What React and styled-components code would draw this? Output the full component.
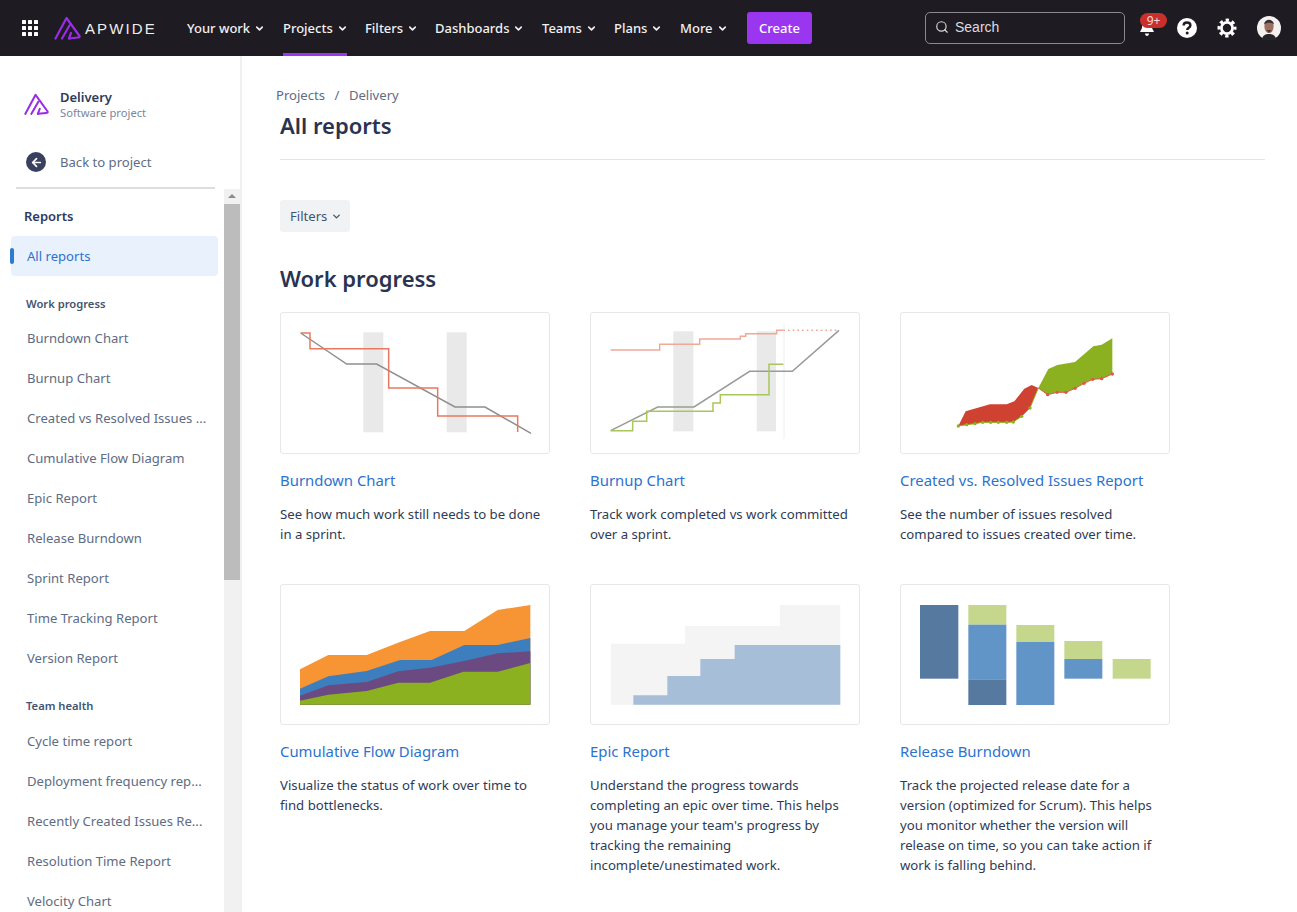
import styled, { createGlobalStyle } from 'styled-components';
import { ArrowLeft, ChevronDown, Search } from 'lucide-react';

const GlobalStyle = createGlobalStyle`
  html, body {
    margin: 0;
    height: 100%;
    overflow: hidden;
    background: #fff;
  }
  body {
    font-family: "Noto Sans", "Open Sans", Arial, sans-serif;
    font-size: 13.1px;
    color: #2f3b55;
  }
`;

const navItems = [
  { label: 'Your work', width: 96 },
  { label: 'Projects', width: 82, active: true },
  { label: 'Filters', width: 70 },
  { label: 'Dashboards', width: 107 },
  { label: 'Teams', width: 72 },
  { label: 'Plans', width: 66 },
  { label: 'More', width: 67 },
];

const workProgress = [
  'Burndown Chart',
  'Burnup Chart',
  'Created vs Resolved Issues ...',
  'Cumulative Flow Diagram',
  'Epic Report',
  'Release Burndown',
  'Sprint Report',
  'Time Tracking Report',
  'Version Report',
];

const teamHealth = [
  'Cycle time report',
  'Deployment frequency rep...',
  'Recently Created Issues Re...',
  'Resolution Time Report',
  'Velocity Chart',
];

const BurndownArt = () => (
  <svg viewBox="18 25 804 420" width="100%" height="100%">
    <rect x="265" y="83" width="60" height="300" fill="#e9e9e9" />
    <rect x="515" y="83" width="60" height="300" fill="#e9e9e9" />
    <polyline points="77,85 215,178 305,178 540,307 630,307 768,386" fill="none" stroke="#8f8f8f" strokeWidth="4.5" />
    <polyline points="77,85 105,85 105,132 341,132 341,250 488,250 488,334 728,334 728,382" fill="none" stroke="#e8785f" strokeWidth="4.5" />
  </svg>
);

const BurnupArt = () => (
  <svg viewBox="18 25 804 420" width="100%" height="100%">
    <rect x="265" y="80" width="60" height="300" fill="#e9e9e9" />
    <rect x="515" y="80" width="58" height="300" fill="#e9e9e9" />
    <line x1="597" y1="57" x2="597" y2="403" stroke="#eeeeee" strokeWidth="3" />
    <polyline points="77,136 224,136 224,119 344,119 344,103 466,103 466,95 482,95 482,87 575,87 575,77 595,77" fill="none" stroke="#f0a898" strokeWidth="4.5" />
    <line x1="595" y1="77" x2="762" y2="77" stroke="#f0a898" strokeWidth="4.5" strokeDasharray="5 9" />
    <polyline points="77,378 218,307 327,307 494,200 622,200 762,77" fill="none" stroke="#9a9a9a" strokeWidth="4.5" />
    <polyline points="77,378 143,378 143,350 185,350 185,320 384,320 384,295 406,295 406,270 552,270 552,179 595,179" fill="none" stroke="#a9c65a" strokeWidth="4.5" />
  </svg>
);

const greenDots = [[190, 364], [215, 360], [240, 357], [263, 353], [287, 353], [310, 353], [335, 353], [355, 352], [380, 335], [405, 310]];
const redDots = [[458, 270], [486, 263], [513, 263], [540, 251], [567, 236], [593, 224], [620, 222], [652, 208]];

const CreatedArt = () => (
  <svg viewBox="18 25 804 420" width="100%" height="100%">
    <polygon points="190,364 212,320 285,299 335,299 358,290 388,252 410,241 430,250 405,310 380,335 355,352 335,353 263,353 240,357 215,360" fill="#cf4232" />
    <polygon points="430,250 460,193 487,181 540,172 595,125 620,120 652,101 652,208 620,222 593,224 567,236 540,251 513,263 486,263 458,270" fill="#8bb120" />
    <polyline points={greenDots.map((p) => p.join(',')).join(' ') + ' 430,250'} fill="none" stroke="#8bb120" strokeWidth="3" />
    <polyline points={'430,250 ' + redDots.map((p) => p.join(',')).join(' ')} fill="none" stroke="#e0574a" strokeWidth="3" />
    {greenDots.map(([x, y]) => <circle key={x} cx={x} cy={y} r="5" fill="#8bb120" />)}
    {redDots.map(([x, y]) => <circle key={x} cx={x} cy={y} r="5" fill="#e0574a" />)}
  </svg>
);

const CumulativeArt = () => (
  <svg viewBox="18 19 804 417" width="100%" height="100%">
    <polygon points="75,272 160,229 275,229 375,190 465,157 568,157 668,94 766,79 766,378 75,378" fill="#f79433" />
    <polygon points="75,330 160,293 275,277 375,244 470,244 568,199 668,199 766,178 766,378 75,378" fill="#3d7ebf" />
    <polygon points="75,351 160,320 275,310 370,278 465,267 568,247 668,224 766,218 766,378 75,378" fill="#6a4a80" />
    <polygon points="75,366 160,348 275,337 370,312 465,312 565,279 668,279 766,253 766,378 75,378" fill="#8bb120" />
  </svg>
);

const EpicArt = () => (
  <svg viewBox="18 19 804 417" width="100%" height="100%">
    <polygon points="78,195 300,195 300,142 585,142 585,79 766,79 766,378 78,378" fill="#f4f4f4" />
    <polygon points="145,378 145,350 247,350 247,292 346,292 346,241 449,241 449,199 766,199 766,378" fill="#a7bed8" />
  </svg>
);

const releaseBars = [
  [75, 79, 115, 221, '#56799f'],
  [220, 79, 114, 59, '#c5d78d'],
  [220, 138, 114, 164, '#6195c8'],
  [220, 302, 114, 77, '#56799f'],
  [364, 139, 114, 51, '#c5d78d'],
  [364, 190, 114, 189, '#6195c8'],
  [508, 187, 114, 54, '#c5d78d'],
  [508, 241, 114, 59, '#6195c8'],
  [653, 241, 114, 59, '#c5d78d'],
];

const ReleaseArt = () => (
  <svg viewBox="18 19 804 417" width="100%" height="100%">
    {releaseBars.map(([x, y, w, h, fill]) => (
      <rect key={`${x}-${y}`} x={x} y={y} width={w} height={h} fill={fill} />
    ))}
  </svg>
);

const reports = [
  {
    title: 'Burndown Chart',
    text: 'See how much work still needs to be done in a sprint.',
    Art: BurndownArt,
    artHeight: 142,
  },
  {
    title: 'Burnup Chart',
    text: 'Track work completed vs work committed over a sprint.',
    Art: BurnupArt,
    artHeight: 142,
  },
  {
    title: 'Created vs. Resolved Issues Report',
    text: 'See the number of issues resolved compared to issues created over time.',
    Art: CreatedArt,
    artHeight: 142,
  },
  {
    title: 'Cumulative Flow Diagram',
    text: 'Visualize the status of work over time to find bottlenecks.',
    Art: CumulativeArt,
    artHeight: 141,
  },
  {
    title: 'Epic Report',
    text: "Understand the progress towards completing an epic over time. This helps you manage your team's progress by tracking the remaining incomplete/unestimated work.",
    Art: EpicArt,
    artHeight: 141,
  },
  {
    title: 'Release Burndown',
    text: 'Track the projected release date for a version (optimized for Scrum). This helps you monitor whether the version will release on time, so you can take action if work is falling behind.',
    Art: ReleaseArt,
    artHeight: 141,
  },
];

const Logo = ({ width, stroke }) => (
  <svg width={width} viewBox="0 0 27 24" fill="none" stroke={stroke} strokeWidth="2.2" strokeLinejoin="round" strokeLinecap="round">
    <path d="M1.5 22.5 L12.5 2 L25.5 20 Q26 21.5 24 21.5 L15 22.5" />
    <path d="M8 22.5 L15.5 9.5" />
    <path d="M15 22.5 L17 17" />
  </svg>
);

const AppsIcon = () => (
  <svg width="16" height="16" viewBox="0 0 16 16" fill="#fff">
    {[0, 6, 12].map((y) => [0, 6, 12].map((x) => (
      <rect key={`${x}-${y}`} x={x} y={y} width="4" height="4" rx="0.6" />
    )))}
  </svg>
);

const BellIcon = () => (
  <svg width="18" height="18" viewBox="0 0 18 18" fill="#fff">
    <path d="M9 2 C5 2 4 6 4 9 L2 13 H16 L14 9 C14 6 13 2 9 2 Z" />
    <path d="M7 14.5 H11 C11 16 10 17 9 17 C8 17 7 16 7 14.5 Z" />
  </svg>
);

const HelpIcon = () => (
  <svg width="22" height="22" viewBox="0 0 22 22">
    <circle cx="11" cy="11" r="10" fill="#fff" />
    <path d="M7.6 8.6 C7.6 6.6 9.2 5.5 11 5.5 C12.9 5.5 14.4 6.7 14.4 8.4 C14.4 10.6 11.2 10.8 11.2 13" fill="none" stroke="#1f1b22" strokeWidth="2.4" />
    <circle cx="11.2" cy="16" r="1.5" fill="#1f1b22" />
  </svg>
);

const GearIcon = () => (
  <svg width="20" height="20" viewBox="0 0 20 20" fill="none" stroke="#fff">
    <circle cx="10" cy="10" r="5.6" strokeWidth="2.8" />
    <circle cx="10" cy="10" r="8" strokeWidth="3" strokeDasharray="3.3 2.98" strokeDashoffset="1.6" />
  </svg>
);

const AvatarIcon = () => (
  <svg width="24" height="24" viewBox="0 0 24 24">
    <circle cx="12" cy="12" r="12" fill="#f4f2f0" />
    <path d="M5 24 C5 19 9 18 12 18 C15 18 19 19 19 24 Z" fill="#26262a" />
    <ellipse cx="12" cy="10.5" rx="4.6" ry="6.6" fill="#9c6f5e" />
    <path d="M7 8.5 C7.5 2.5 16.5 2 17 8.5 C14.5 6 10 6 7 8.5 Z" fill="#3a3030" />
    <path d="M9.5 14 H14.5 L12 17 Z" fill="#4f332e" />
  </svg>
);

const App = () => {
  return (
    <>
      <GlobalStyle />
      <Page>
        <TopBar>
          <AppsButton>
            <AppsIcon />
          </AppsButton>
          <Brand>
            <Logo width={27} stroke="#9a2be8" />
            <BrandName>APWIDE</BrandName>
          </Brand>
          <Nav>
            {navItems.map((item) => (
              <NavItem key={item.label} $width={item.width} $active={item.active}>
                {item.label}
                <ChevronDown size={11} strokeWidth={3.5} />
              </NavItem>
            ))}
            <CreateButton>Create</CreateButton>
          </Nav>
          <RightTools>
            <SearchBox>
              <Search size={14} strokeWidth={2} color="#d8d8d8" />
              Search
            </SearchBox>
            <BellWrap>
              <BellIcon />
              <Badge>9+</Badge>
            </BellWrap>
            <ToolIcon $gap={19}>
              <HelpIcon />
            </ToolIcon>
            <ToolIcon $gap={20}>
              <GearIcon />
            </ToolIcon>
            <ToolIcon $gap={0}>
              <AvatarIcon />
            </ToolIcon>
          </RightTools>
        </TopBar>
        <Body>
          <Sidebar>
            <ProjectHead>
              <Logo width={25} stroke="#9a2be8" />
              <div>
                <ProjectName>Delivery</ProjectName>
                <ProjectType>Software project</ProjectType>
              </div>
            </ProjectHead>
            <BackRow>
              <BackCircle>
                <ArrowLeft size={13} strokeWidth={3.2} color="#fff" />
              </BackCircle>
              Back to project
            </BackRow>
            <SideDivider />
            <SideScroll>
              <SideList>
                <ReportsLabel>Reports</ReportsLabel>
                <ActiveItem>All reports</ActiveItem>
                <GroupLabel $after={6}>Work progress</GroupLabel>
                {workProgress.map((name) => (
                  <SideItem key={name}>{name}</SideItem>
                ))}
                <GroupLabel $after={7}>Team health</GroupLabel>
                {teamHealth.map((name) => (
                  <SideItem key={name}>{name}</SideItem>
                ))}
              </SideList>
              <ScrollBar>
                <ScrollArrow />
                <ScrollThumb />
              </ScrollBar>
            </SideScroll>
          </Sidebar>
          <Main>
            <Breadcrumbs>
              <span>Projects</span>
              <span>/</span>
              <span>Delivery</span>
            </Breadcrumbs>
            <PageTitle>All reports</PageTitle>
            <Divider />
            <FiltersButton>
              Filters
              <ChevronDown size={11} strokeWidth={3} />
            </FiltersButton>
            <SectionTitle>Work progress</SectionTitle>
            <CardGrid>
              {reports.map(({ title, text, Art, artHeight }) => (
                <Card key={title}>
                  <Thumb $height={artHeight}>
                    <Art />
                  </Thumb>
                  <CardTitle>{title}</CardTitle>
                  <CardText>{text}</CardText>
                </Card>
              ))}
            </CardGrid>
          </Main>
        </Body>
      </Page>
    </>
  );
};
export default App;

const Page = styled.div`
  display: flex;
  flex-direction: column;
  height: 100vh;
  overflow: hidden;
`;
const TopBar = styled.header`
  display: flex;
  align-items: center;
  flex: 0 0 56px;
  height: 56px;
  background: #1f1b22;
  color: #f1f1f1;
`;
const AppsButton = styled.div`
  display: flex;
  margin: 0 16px 0 22px;
`;
const Brand = styled.div`
  display: flex;
  align-items: center;
  gap: 4px;
  width: 133px;
`;
const BrandName = styled.span`
  font-family: "Liberation Sans", Arial, sans-serif;
  font-size: 15px;
  letter-spacing: 2.1px;
  color: #eeeeee;
`;
const Nav = styled.nav`
  display: flex;
  align-items: center;
  height: 100%;
`;
const NavItem = styled.div`
  box-sizing: border-box;
  display: flex;
  align-items: center;
  gap: 4px;
  width: ${(p) => p.$width}px;
  height: 100%;
  position: relative;
  font-size: 13px;
  font-weight: 500;
  white-space: nowrap;
  &::after {
    content: '';
    display: ${(p) => (p.$active ? 'block' : 'none')};
    position: absolute;
    left: 0;
    bottom: 0;
    width: 64px;
    height: 3px;
    background: #9b36f0;
  }
`;
const CreateButton = styled.button`
  width: 65px;
  height: 32px;
  border: none;
  border-radius: 3px;
  background: #9b36f0;
  color: #fff;
  font: 500 13px "Noto Sans", sans-serif;
`;
const RightTools = styled.div`
  display: flex;
  align-items: center;
  margin-left: auto;
  padding-right: 16px;
`;
const SearchBox = styled.div`
  box-sizing: border-box;
  display: flex;
  align-items: center;
  gap: 6px;
  width: 200px;
  height: 32px;
  padding: 0 0 2px 9px;
  margin-right: 13px;
  border: 1px solid #8a8a8e;
  border-radius: 5px;
  font: 14px "Liberation Sans", Arial, sans-serif;
  color: #dcdce0;
`;
const BellWrap = styled.div`
  position: relative;
  display: flex;
  justify-content: center;
  width: 18px;
  margin-right: 20px;
  padding-bottom: 1px;
`;
const Badge = styled.span`
  position: absolute;
  left: 2px;
  top: -6px;
  width: 27px;
  height: 15px;
  border-radius: 8px;
  background: #c9302c;
  color: #f8dcdc;
  font-size: 12px;
  line-height: 15px;
  text-align: center;
`;
const ToolIcon = styled.div`
  display: flex;
  margin-right: ${(p) => p.$gap}px;
`;
const Body = styled.div`
  display: flex;
  flex: 1;
  min-height: 0;
`;
const Sidebar = styled.aside`
  box-sizing: border-box;
  display: flex;
  flex-direction: column;
  flex: 0 0 242px;
  min-width: 0;
  width: 242px;
  border-right: 2px solid #f0f0f2;
`;
const ProjectHead = styled.div`
  display: flex;
  align-items: center;
  gap: 11px;
  height: 42px;
  padding: 27px 0 0 24px;
`;
const ProjectName = styled.div`
  font-size: 13px;
  font-weight: 600;
  line-height: 16px;
  color: #2f3a5a;
`;
const ProjectType = styled.div`
  font-size: 11.2px;
  line-height: 15px;
  color: #7a869a;
`;
const BackRow = styled.div`
  display: flex;
  align-items: center;
  gap: 14px;
  margin-top: 26px;
  padding-left: 26px;
  height: 22px;
  color: #5e6c84;
`;
const BackCircle = styled.span`
  display: flex;
  align-items: center;
  justify-content: center;
  width: 20px;
  height: 20px;
  border-radius: 50%;
  background: #3a415f;
`;
const SideDivider = styled.div`
  height: 2px;
  margin: 14px 25px 0 16px;
  background: #dcdde0;
`;
const SideScroll = styled.div`
  display: flex;
  flex: 1;
  min-height: 0;
  overflow: hidden;
`;
const SideList = styled.div`
  flex: 1;
  min-width: 0;
  padding-top: 17px;
`;
const ReportsLabel = styled.div`
  height: 20px;
  padding-left: 24px;
  font-size: 13px;
  font-weight: 600;
  line-height: 20px;
  color: #2f3a5a;
`;
const ActiveItem = styled.div`
  position: relative;
  height: 40px;
  margin: 10px 6px 0 11px;
  padding-left: 16px;
  border-radius: 4px;
  background: #e9f1fd;
  color: #2c73cf;
  line-height: 40px;
  &::before {
    content: '';
    position: absolute;
    left: -1px;
    top: 12px;
    width: 4px;
    height: 16px;
    border-radius: 2px;
    background: #2c7bd0;
  }
`;
const GroupLabel = styled.div`
  height: 16px;
  margin-top: 20px;
  margin-bottom: ${(p) => p.$after}px;
  padding-left: 26px;
  font-size: 11.2px;
  font-weight: 600;
  line-height: 16px;
  color: #44546f;
`;
const SideItem = styled.div`
  height: 40px;
  padding-left: 27px;
  color: #5e6c84;
  line-height: 40px;
  white-space: nowrap;
`;
const ScrollBar = styled.div`
  flex: 0 0 16px;
  background: #f1f1f1;
`;
const ScrollArrow = styled.div`
  width: 0;
  height: 0;
  margin: 5px auto 6px;
  border-left: 4px solid transparent;
  border-right: 4px solid transparent;
  border-bottom: 4px solid #8a8a8a;
`;
const ScrollThumb = styled.div`
  height: 376px;
  background: #bcbcbc;
`;
const Main = styled.main`
  flex: 1;
  min-width: 0;
  padding: 29px 32px 0 38px;
`;
const Breadcrumbs = styled.div`
  display: flex;
  gap: 9.5px;
  margin-left: -4px;
  height: 20px;
  color: #5e6c84;
  line-height: 20px;
`;
const PageTitle = styled.h1`
  margin: 4px 0 0;
  font-size: 22px;
  font-weight: 600;
  line-height: 32px;
  color: #2a3450;
`;
const Divider = styled.div`
  height: 1px;
  margin-top: 18px;
  background: #e4e5e8;
`;
const FiltersButton = styled.button`
  display: flex;
  align-items: center;
  gap: 4px;
  height: 32px;
  margin-top: 40px;
  padding: 0 8px 0 10px;
  border: none;
  border-radius: 3px;
  background: #f1f2f4;
  color: #44546f;
  font: 13.1px "Noto Sans", sans-serif;
`;
const SectionTitle = styled.h2`
  margin: 29px 0 0;
  font-size: 22px;
  font-weight: 600;
  line-height: 34px;
  color: #2a3450;
`;
const CardGrid = styled.div`
  display: grid;
  grid-template-columns: repeat(3, 270px);
  grid-template-rows: 272px auto;
  column-gap: 40px;
  margin-top: 17px;
`;
const Card = styled.article`
  display: flex;
  flex-direction: column;
`;
const Thumb = styled.div`
  box-sizing: border-box;
  width: 270px;
  height: ${(p) => p.$height}px;
  border: 1px solid #e6e7ea;
  border-radius: 3px;
  overflow: hidden;
  svg {
    display: block;
  }
`;
const CardTitle = styled.a`
  margin-top: 15px;
  font-size: 14.9px;
  line-height: 22px;
  color: #2c73cf;
`;
const CardText = styled.p`
  margin: 13px 0 0;
  font-size: 13.2px;
  line-height: 20px;
`;
